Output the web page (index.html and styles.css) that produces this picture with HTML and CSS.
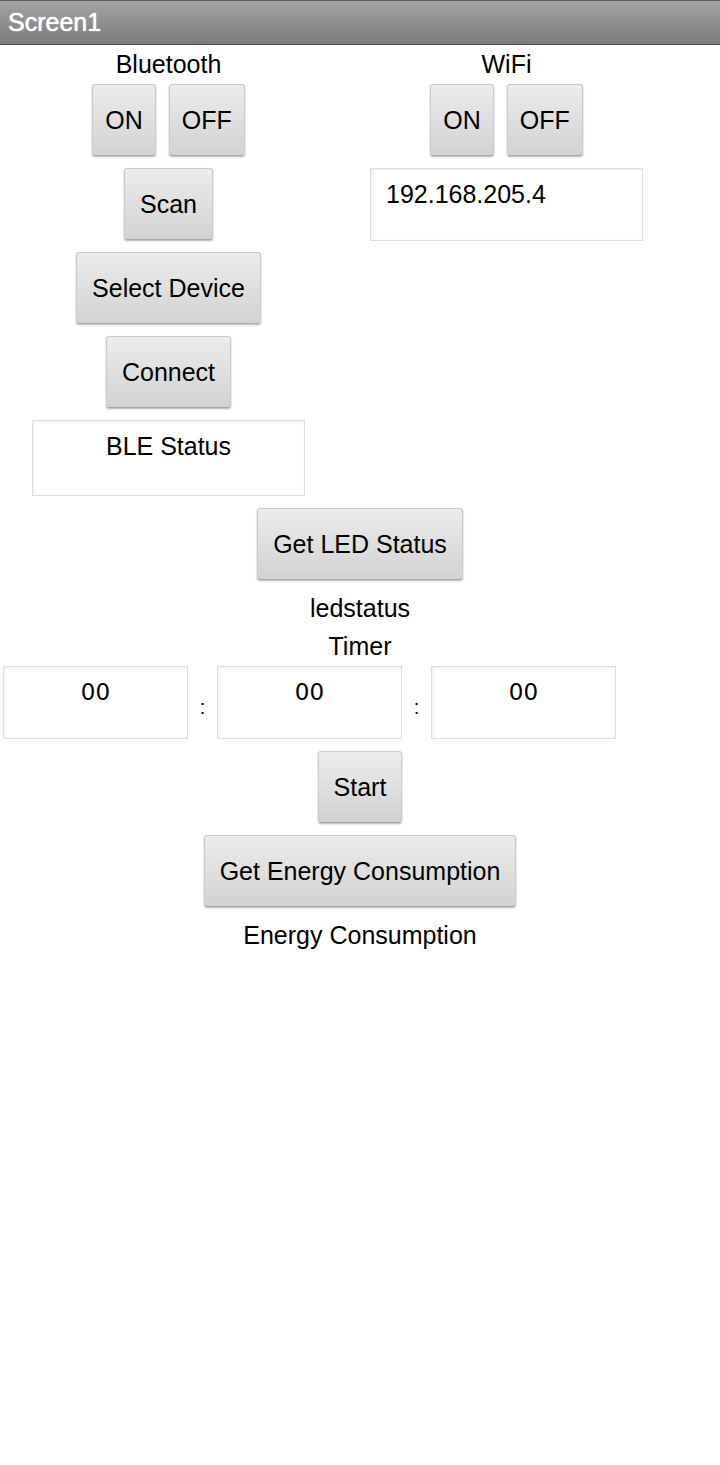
FILE: index.html
```html
<!DOCTYPE html>
<html>
<head>
<meta charset="utf-8">
<title>Screen1</title>
<link rel="stylesheet" href="styles.css">
</head>
<body>
<div class="titlebar">Screen1</div>
<div class="main">
  <div class="columns">
    <div class="col col-left">
      <div class="label label-head">Bluetooth</div>
      <div class="btnrow">
        <div class="btn btn-small">ON</div>
        <div class="btn btn-small">OFF</div>
      </div>
      <div class="btn stack">Scan</div>
      <div class="btn stack">Select Device</div>
      <div class="btn stack">Connect</div>
      <div class="textbox box-ble">BLE Status</div>
    </div>
    <div class="col col-right">
      <div class="label label-head">WiFi</div>
      <div class="btnrow">
        <div class="btn btn-small">ON</div>
        <div class="btn btn-small">OFF</div>
      </div>
      <div class="textbox box-ip">192.168.205.4</div>
    </div>
  </div>
  <div class="btn stack">Get LED Status</div>
  <div class="label label-led">ledstatus</div>
  <div class="label label-timer">Timer</div>
  <div class="timerrow">
    <div class="textbox box-time">00</div>
    <div class="colon">:</div>
    <div class="textbox box-time">00</div>
    <div class="colon">:</div>
    <div class="textbox box-time">00</div>
  </div>
  <div class="btn stack">Start</div>
  <div class="btn stack">Get Energy Consumption</div>
  <div class="label label-energy">Energy Consumption</div>
</div>
</body>
</html>
```
FILE: styles.css
```css
html, body {
  margin: 0;
  padding: 0;
  background: #ffffff;
}

body {
  width: 720px;
  height: 1465px;
  font-family: "Liberation Sans", Arial, Helvetica, sans-serif;
  font-size: 25px;
  color: #000000;
  overflow: hidden;
}

.titlebar {
  box-sizing: border-box;
  height: 45px;
  line-height: 43px;
  padding-left: 8px;
  color: #ffffff;
  font-size: 25px;
  background: linear-gradient(#a3a3a3, #7c7c7c);
  border-top: 1px solid #5e5e5e;
  border-bottom: 1px solid #4f4f4f;
  text-shadow: 0 0 1px rgba(255, 255, 255, 0.9), 0 0 1px rgba(255, 255, 255, 0.6);
}

.main {
  display: flex;
  flex-direction: column;
  align-items: center;
}

.columns {
  display: flex;
  align-self: flex-start;
}

.col {
  display: flex;
  flex-direction: column;
  align-items: center;
}

.col-left {
  width: 337px;
}

.col-right {
  width: 339px;
}

.label {
  line-height: 28px;
  white-space: nowrap;
}

.label-head {
  margin-top: 5px;
}

.btnrow {
  display: flex;
  gap: 13px;
  margin-top: 6px;
}

.btn {
  box-sizing: border-box;
  height: 72px;
  padding: 0 15px;
  display: flex;
  align-items: center;
  justify-content: center;
  white-space: nowrap;
  background: linear-gradient(#ececec, #d2d2d2);
  border: 1px solid #cbcbcb;
  border-bottom-color: #a6a6a6;
  border-radius: 3px;
  box-shadow: 0 1px 2px rgba(0, 0, 0, 0.3);
}

.btn-small {
  padding: 0 12px;
}

.stack {
  margin-top: 12px;
}

.textbox {
  box-sizing: border-box;
  background: #ffffff;
  border: 1px solid #dedede;
  box-shadow: inset 1px 1px 3px rgba(0, 0, 0, 0.07);
  line-height: 28px;
  padding-top: 11px;
  white-space: nowrap;
}

.box-ble {
  width: 273px;
  height: 76px;
  margin-top: 12px;
  text-align: center;
}

.box-ip {
  width: 273px;
  height: 73px;
  margin-top: 12px;
  padding-left: 15px;
}

.label-led {
  margin-top: 14px;
}

.label-timer {
  margin-top: 10px;
}

.timerrow {
  display: flex;
  align-self: flex-start;
  margin-top: 6px;
  padding-left: 3px;
}

.box-time {
  width: 185px;
  height: 73px;
  text-align: center;
  font-family: "DejaVu Sans", sans-serif;
  font-size: 23px;
}

.colon {
  width: 29px;
  display: flex;
  align-items: flex-end;
  justify-content: center;
  font-size: 20px;
  line-height: 20px;
  padding-bottom: 22px;
  box-sizing: border-box;
}

.label-energy {
  margin-top: 14px;
}
```
